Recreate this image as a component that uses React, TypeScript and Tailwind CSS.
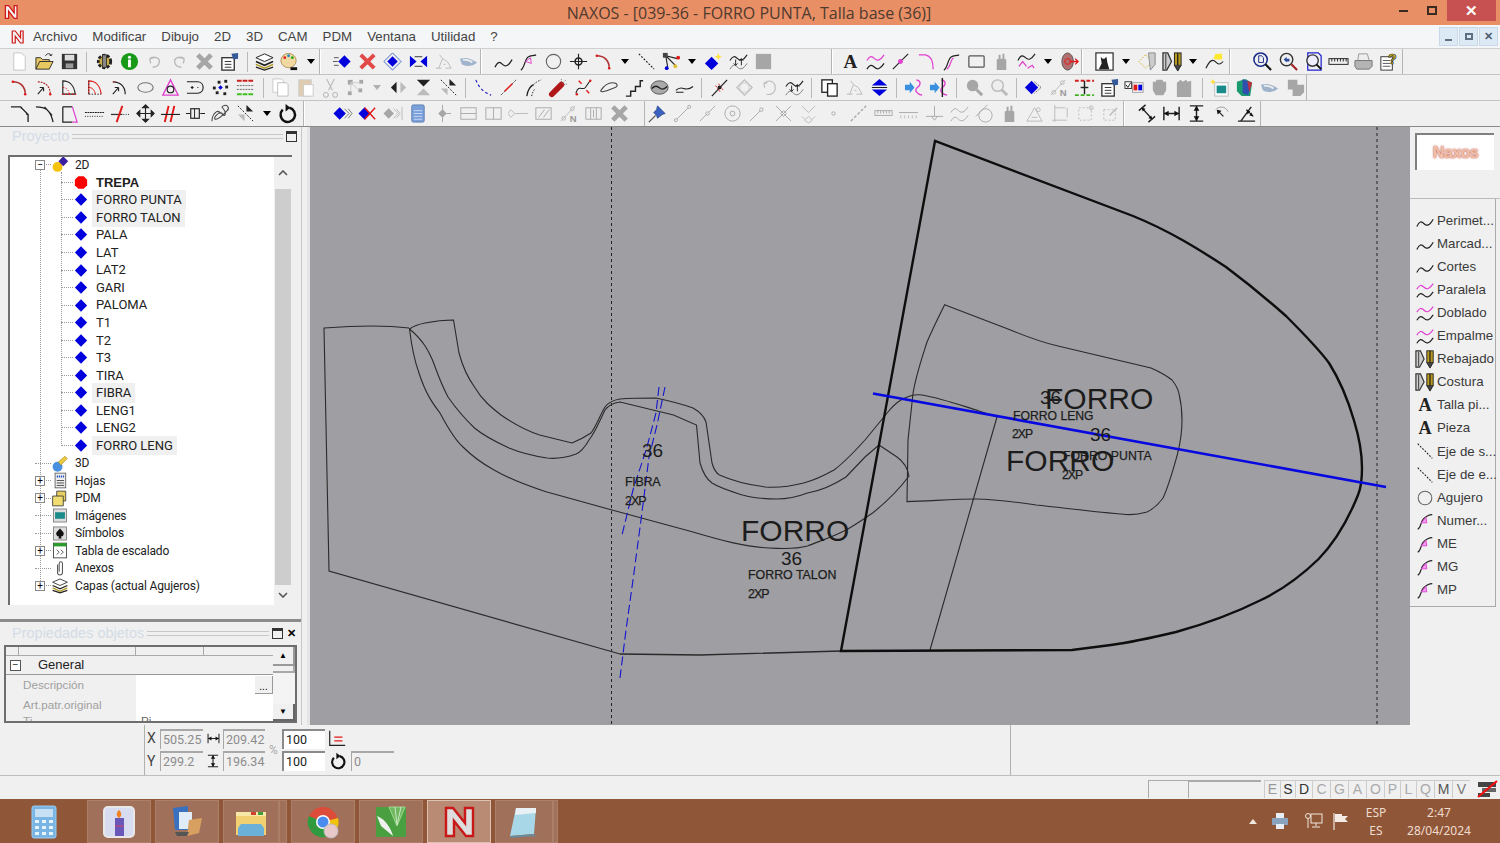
// Main window of the NAXOS pattern CAD program
import type { ReactNode } from 'react';

const G = '#a6a6a6';
const B = '#0000dd';
const R = '#e01818';
const P = '#e040d0';
const K = '#222222';

const diamond = (cx: number, cy: number, r: number, fill = B) => (
  <path d={`M${cx - r} ${cy}L${cx} ${cy - r}L${cx + r} ${cy}L${cx} ${cy + r}Z`} fill={fill} stroke="none" />
);
const wave = 'M2 17c3-6 5-6 8-3s6 2 10-5';
const wave2 = 'M2 10c3-5 5-5 8-2s6 2 10-4';
const wave3 = 'M2 19c3-5 5-5 8-2s6 2 10-4';

const ICONS: Record<string, ReactNode> = {
  new: <path d="M5 2h8l4 4v14H5z" fill="#fff" stroke="#c4c4c4" />,
  open: <><path d="M2 19V7h5l2 2h7v2H6l-4 8h14l4-8H6" fill="#e8c860" stroke="#333" /><path d="M12 5c2-3 5-3 6 0M18 5l-2-1M18 5l1-2" stroke="#333" /></>,
  save: <><rect x="3" y="3" width="16" height="16" fill="#333" stroke="none" /><rect x="6" y="4" width="10" height="6" fill="#ddd" stroke="none" /><rect x="7" y="13" width="8" height="5" fill="#999" stroke="none" /></>,
  gear: <><circle cx="11" cy="11" r="6.5" fill="#c9b04a" stroke="#222" strokeWidth="3" strokeDasharray="3 1.6" /><rect x="9" y="4" width="4" height="13" fill="#888" stroke="#222" strokeWidth=".8" /></>,
  info: <><circle cx="11" cy="11" r="9" fill="#189a18" stroke="none" /><circle cx="11" cy="6.5" r="1.6" fill="#fff" stroke="none" /><rect x="9.5" y="9" width="3" height="8" fill="#fff" stroke="none" /></>,
  undo: <path d="M6 8c5-3 11-1 10 4s-5 5-7 5M6 8l1 5M6 8l5-1" stroke="#b8b8b8" strokeWidth="1.4" />,
  redo: <path d="M16 8c-5-3-11-1-10 4s5 5 7 5M16 8l-1 5M16 8l-5-1" stroke="#b8b8b8" strokeWidth="1.4" />,
  xgray: <path d="M4 4l14 14M18 4L4 18" stroke={G} strokeWidth="5" />,
  props: <><rect x="3" y="7" width="13" height="13" fill="#fff" stroke="#333" strokeWidth="1.4" /><path d="M6 11h7M6 14h7M6 17h7" stroke="#333" /><path d="M13 3l7-1v6l-5 1z" fill="#345a9a" stroke="none" /></>,
  layers: <><path d="M2 7l9-4 9 4-9 4z" fill="#fff" stroke="#222" /><path d="M2 11l9 4 9-4" stroke="#222" strokeWidth="1.6" /><path d="M2 14l9 4 9-4" stroke="#b09a20" strokeWidth="1.6" /><path d="M2 17l9 3 9-3" stroke="#222" strokeWidth="1.4" /></>,
  palette: <><ellipse cx="10" cy="10" rx="8" ry="7.5" fill="#f0d8a0" stroke="#a08040" strokeWidth=".8" /><circle cx="6" cy="7" r="1.5" fill="#d22" stroke="none" /><circle cx="10" cy="5" r="1.5" fill="#28c" stroke="none" /><circle cx="14" cy="7" r="1.5" fill="#2a2" stroke="none" /><rect x="12" y="17" width="7" height="3" fill="#111" stroke="none" /></>,
  diaArrows: <>{diamond(13, 11, 6.5)}<path d="M2 7h5M1 11h5M2 15h5" stroke="#555" /></>,
  xred: <path d="M4 4l14 14M18 4L4 18" stroke="#e24a4a" strokeWidth="4.2" />,
  diaRing: <>{diamond(11, 11, 5.5)}<path d="M11 2l9 9-9 9-9-9z" stroke="#3060c0" strokeWidth=".9" /></>,
  bowtie: <><path d="M2 5l7 6-7 6zM20 5l-7 6 7 6z" fill={B} stroke="none" /><path d="M7 6h8M7 16h8" stroke="#333" /></>,
  treeG: <path d="M3 18h6M13 18h6M6 18l4-10 5 3 4 7M10 8l-3-4M11 14h2" stroke="#bbb" />,
  shoe: <><path d="M2 8c6-2 12 0 18 4-4 4-12 5-16 2z" fill="#9fb4cc" stroke="none" /><path d="M5 9c4 0 8 1 10 3" stroke="#eee" strokeWidth="2" /></>,
  curve: <path d={wave} strokeWidth="1.3" />,
  curveP: <><path d="M3 20c4-2 4-12 8-14 2-1 5-1 8-2" strokeWidth="1.3" /><path d="M8 11l5-4 1 6z" stroke={P} /></>,
  circle: <circle cx="11" cy="11" r="7.5" stroke="#666" strokeWidth="1.2" />,
  cross: <><path d="M2 11h18M11 3v16" strokeWidth="1.2" /><circle cx="11" cy="11" r="3.6" strokeWidth="1.6" /></>,
  arcR: <><path d="M4 5c8 0 13 5 13 13" strokeWidth="1.6" stroke="#b03030" /><circle cx="4" cy="5" r="1.3" fill={R} stroke="none" /><circle cx="17" cy="18" r="1.3" fill={R} stroke="none" /></>,
  dash: <path d="M3 3l16 16" strokeDasharray="2 1.6" strokeWidth="1.2" />,
  nodes: <><path d="M5 5l12 3M5 5l2 12M5 5l10 10" strokeWidth="1.2" /><rect x="2" y="2" width="5" height="5" fill="#444" stroke="none" /><circle cx="18" cy="7" r="2" fill={R} stroke="none" /><circle cx="6" cy="18" r="2" fill={B} stroke="none" /><circle cx="15" cy="16" r="2" fill="#e0c030" stroke="none" /></>,
  diaStar: <>{diamond(9, 13, 7)}<path d="M16 2l1 3 3 1-3 1-1 3-1-3-3-1 3-1z" fill="#ffe040" stroke="none" /></>,
  waveArr: <><path d={wave2} strokeWidth="1.2" /><path d="M2 19c3-5 5-5 8-2s6 2 10-4" stroke="#777" /><path d="M8 9v6M6 13l2 2 2-2M14 15V8M12 10l2-2 2 2" strokeWidth="1" /></>,
  square: <rect x="3" y="3" width="16" height="16" fill={G} stroke="none" />,
  A: <text x="11" y="18" textAnchor="middle" fontFamily="'Liberation Serif',serif" fontSize="20" fontWeight="700" fill="#222" stroke="none">A</text>,
  waveP: <><path d={wave2} stroke={P} strokeWidth="1.3" /><path d={wave3} strokeWidth="1.3" /></>,
  lineP: <><path d="M3 19L19 3" strokeWidth="1.2" /><circle cx="11" cy="11" r="2.6" fill={P} stroke="none" /></>,
  cornerP: <path d="M3 4h7c5 1 8 5 8 15" stroke={P} strokeWidth="1.3" />,
  curveP2: <><path d="M3 20c4-2 4-12 8-14 2-1 5-1 8-2" strokeWidth="1.3" /><path d="M6 19c4-2 4-10 7-12" stroke={P} strokeWidth="1.2" /></>,
  rect: <rect x="3" y="5" width="16" height="12" rx="1" stroke="#555" strokeWidth="1.3" />,
  hand: <path d="M6 20V9l2-1V4h2v4h2V3h2v5l2 1v11z" fill={G} stroke="none" />,
  waveMix: <><path d="M2 10c3-6 5-6 8-3s6 2 10-4" strokeWidth="1.2" /><path d="M3 16l4-5 4 5M12 18l5-3 2 3" stroke={P} strokeWidth="1.3" /></>,
  target: <><ellipse cx="9" cy="11" rx="6" ry="9" fill="#b07070" stroke="#555" /><circle cx="9" cy="11" r="3" stroke={R} /><path d="M11 11h9M17 8l3 3-3 3" stroke={R} strokeWidth="1.4" /></>,
  cat: <><rect x="2" y="2" width="18" height="18" fill="#fff" stroke="#333" strokeWidth="1.3" /><path d="M7 6l2 2h2l2-2 1 6 2 7H5l3-6z" fill="#222" stroke="none" /></>,
  dotDia: <><path d="M9 4l-7 7 7 7 7-7z" stroke="#c8b020" strokeDasharray="1.6 1.6" /><path d="M12 2h7v12l-5 6z" fill="#ccc" stroke="#888" /></>,
  pens: <><path d="M1 2h5l4 9-5 9H1z" stroke="#333" strokeWidth="1.3" fill="#ccc" /><path d="M4 3v16" stroke="#333" /><rect x="13" y="2" width="7" height="13" fill="#b89a20" stroke="#222" /><path d="M16.500 2v13" stroke="#222" strokeWidth="1.400" /><path d="M13 15l3.500 6 3.500-6" fill="#444" stroke="#222" /></>,
  curveY: <><path d="M2 18c3-6 5-9 8-8s5 7 10 1" strokeWidth="1.2" /><path d="M12 3h7v6h-7l-2-1z" fill="#ffe830" stroke="none" /></>,
  z1: <><circle cx="9" cy="9" r="7" stroke="#1a2a8a" strokeWidth="1.6" /><path d="M7 5h3l2 2v5H7z" stroke="#1a2a8a" /><path d="M14 14l6 6" stroke="#111" strokeWidth="2.2" /></>,
  z2: <><circle cx="9" cy="9" r="6.5" stroke="#333" strokeWidth="1.5" /><path d="M6 9l3-3v2h3v3H9v1z" fill="#2a4aa0" stroke="none" /><path d="M14 14l6 6" stroke="#a02020" strokeWidth="2.2" /></>,
  z3: <><path d="M5 2h11l3 3v15H5z" stroke="#2020d0" strokeWidth="1.3" /><circle cx="10" cy="10" r="6" fill="#eef" stroke="#333" strokeWidth="1.4" /><path d="M14 14l5 5" stroke="#111" strokeWidth="2" /></>,
  ruler: <><rect x="1" y="8" width="20" height="6" fill="#eee" stroke="#222" /><path d="M4 8v3M7 8v3M10 8v3M13 8v3M16 8v3M19 8v3" stroke="#222" /></>,
  printer: <><path d="M6 3h9l2 7H5z" fill="#eee" stroke="#999" /><path d="M2 10h18v6l-3 3H4l-2-3z" fill="#b4b4b4" stroke="#777" /></>,
  help: <><rect x="3" y="6" width="12" height="14" fill="#fff" stroke="#333" /><path d="M5 10h8M5 13h8M5 16h8" stroke="#555" /><text x="15" y="14" textAnchor="middle" fontFamily="'Liberation Sans',sans-serif" fontSize="15" fontWeight="700" fill="#e8d020" stroke="#222" strokeWidth=".7">?</text></>,
  arcA: <><path d="M4 5c8 0 13 5 13 13" strokeWidth="1.3" strokeDasharray="2 1" stroke="#b03030" /><path d="M4 18l6-7M10 11H6M10 11v4" strokeWidth="1.2" /><circle cx="17" cy="18" r="1.3" fill={R} stroke="none" /></>,
  sqArc: <><path d="M4 18V4c7 0 12 5 13 14z" strokeWidth="1.2" /><path d="M4 11c4 0 6 3 7 7" stroke={R} strokeDasharray="1.5 1.5" /><path d="M3 18h15" stroke={R} strokeDasharray="1.5 2" strokeWidth="1.5" /></>,
  sqArc2: <><path d="M5 18V4c7 0 12 5 13 14" stroke={R} strokeWidth="1.2" /><path d="M5 18h13M5 4v14" strokeDasharray="1.5 1.5" /><path d="M5 11c4 0 6 3 7 7" stroke={R} /></>,
  arcD: <><path d="M4 5c8 0 13 5 13 13" strokeWidth="1.3" /><path d="M4 5h3" stroke={R} strokeDasharray="1 1" /><path d="M4 18l6-7M10 11H6M10 11v4" strokeWidth="1.2" /></>,
  ellipse: <ellipse cx="11" cy="11" rx="8" ry="5" stroke="#777" strokeWidth="1.2" />,
  triP: <><path d="M11 3l8 16H3z" stroke={P} strokeWidth="1.4" /><circle cx="11" cy="13" r="3.5" strokeWidth="1.2" /></>,
  dShape: <><path d="M2 5h11c8 0 8 12 0 12H2" strokeWidth="1.2" /><path d="M6 11h3M7.5 9.500v3M13 11h1" strokeWidth="1.2" /></>,
  dots: <>{diamond(11, 11, 2.4)}<g fill="#222" stroke="none"><rect x="3" y="10" width="3" height="3" /><rect x="8" y="4" width="3" height="3" /><rect x="15" y="3" width="3" height="3" /><rect x="16" y="9" width="3" height="3" /><rect x="14" y="16" width="3" height="3" /><rect x="6" y="15" width="3" height="3" /></g></>,
  lines3: <><path d="M2 4h18" stroke="#cc2020" strokeWidth="2" strokeDasharray="5 1" /><path d="M2 9h18M2 13h18" strokeDasharray="2 1" stroke="#666" /><path d="M2 18h18" stroke="#40c020" strokeWidth="2" strokeDasharray="5 1" /></>,
  copy: <><path d="M3 2h9l2 2v12H3z" fill="#fff" stroke="#c8c8c8" /><path d="M8 6h9l2 2v12H8z" fill="#fff" stroke="#c0c0c0" /></>,
  paste: <><rect x="4" y="3" width="13" height="17" fill="#e0cdb0" stroke="#ccc" /><rect x="9" y="8" width="10" height="12" fill="#fff" stroke="#ccc" /></>,
  scissors: <path d="M7 2l6 12M15 2L9 14M8 17a2.500 2.500 0 1 1-.1-.1M14 17a2.500 2.500 0 1 0 .1-.1" stroke="#bbb" strokeWidth="1.2" />,
  nodesG: <><g fill={G} stroke="none"><rect x="3" y="3" width="5" height="5" /><rect x="15" y="3" width="4" height="4" /><rect x="3" y="15" width="4" height="4" /><rect x="14" y="12" width="4" height="4" /></g><path d="M6 6h10M6 6v10M6 6l9 8" stroke="#ccc" /></>,
  mirH: <><path d="M9 5v12l-6-6z" fill="#222" stroke="none" /><path d="M13 5v12l6-6z" fill="#bbb" stroke="none" /></>,
  mirV: <><path d="M4 3h14l-7 7z" fill="#222" stroke="none" /><path d="M4 19h14l-7-7z" fill="#bbb" stroke="none" /></>,
  mirD: <><path d="M3 3l16 16" strokeDasharray="2 1.5" /><path d="M12 2l7 7h-7z" fill="#222" stroke="none" /><path d="M3 12h7v7z" fill="#bbb" stroke="none" /></>,
  dashB: <path d="M3 3c3 8 8 13 16 16" stroke="#2020c0" strokeDasharray="3 2.500" strokeWidth="1.2" />,
  lineR: <><path d="M3 19L19 3" stroke="#555" strokeDasharray="3 1" /><path d="M7 15l8-8" stroke={R} strokeWidth="1.6" /></>,
  curveD: <><path d="M4 20c1-7 3-10 7-12" strokeWidth="1.3" /><path d="M11 8c2-2 5-4 8-5M9 20c1-4 2-6 4-8" strokeDasharray="1.500 1.500" /></>,
  dyn: <><path d="M4 18L14 8" stroke="#b01818" strokeWidth="6" strokeLinecap="round" /><path d="M15 7l4-4M17 8l4-1M14 5l0-4" stroke="#777" strokeDasharray="1 1" /></>,
  arrCurve: <><path d="M3 17c3-10 7-2 10-6s4-7 6-7" strokeWidth="1.1" /><path d="M6 4l3 3M17 17l-3-3" stroke={R} strokeWidth="1.5" /><circle cx="4" cy="18" r="1.3" fill={R} stroke="none" /><circle cx="18" cy="4" r="1.3" fill={R} stroke="none" /></>,
  oval: <path d="M2 14c4-6 8-8 12-8 6 0 6 4 3 5s-8 3-11 4-5 0-4-1z" strokeWidth="1.1" stroke="#444" />,
  stairs: <path d="M2 20h5v-5h5v-5h5V4h3" strokeWidth="1.5" />,
  blob: <><ellipse cx="11" cy="11" rx="9" ry="7" fill="#aaa" stroke="#555" /><path d="M3 12c4-4 6-2 9 0s5 0 7-2" strokeWidth="1.4" /></>,
  waveS: <path d="M2 14c3-3 5-3 8-2s6 1 10-2M2 16h8" strokeWidth="1.2" />,
  cut: <><path d="M3 20L19 3" strokeWidth="1.3" /><path d="M10 7l5 7M7 9l5 7" stroke={R} strokeDasharray="2 1" /><circle cx="11" cy="11" r="2" fill="#222" stroke="none" /></>,
  rotG1: <><path d="M11 3l8 8-8 8-8-8z" stroke="#bbb" strokeWidth="1.2" /><circle cx="11" cy="11" r="5" stroke="#ccc" /></>,
  rotG2: <path d="M5 7c4-5 12-3 12 4s-6 8-9 7M5 7l1 4M5 7l4-1" stroke="#bbb" strokeWidth="1.2" />,
  copyD: <><rect x="3" y="3" width="11" height="13" fill="#fff" stroke="#222" strokeWidth="1.4" /><rect x="9" y="7" width="10" height="13" fill="#fff" stroke="#222" strokeWidth="1.4" /></>,
  upDown: <><path d="M3 9l8-7 8 7z" fill={B} stroke="none" /><path d="M3 13l8 7 8-7z" fill={B} stroke="none" /><path d="M3 11h16" stroke="#111" /></>,
  arrP: <><path d="M13 3c5 1 5 5 1 8s0 7 5 8" stroke={P} strokeWidth="1.4" /><path d="M1 8h5V5l5 6-5 6v-3H1z" fill="#3a90e0" stroke="none" /></>,
  arrP2: <><path d="M13 3c5 1 5 5 1 8s0 7 5 8" stroke={P} strokeWidth="1.4" /><path d="M1 8h5V5l5 6-5 6v-3H1z" fill="#3a90e0" stroke="none" /><path d="M14 1v20" stroke="#222" strokeWidth="1.5" /></>,
  zG: <><circle cx="9" cy="9" r="6" fill={G} stroke="none" /><path d="M13 13l6 6" stroke={G} strokeWidth="3" /></>,
  zL: <><circle cx="9" cy="9" r="6" fill="#eee" stroke="#bbb" strokeWidth="1.5" /><path d="M13 13l6 6" stroke="#bbb" strokeWidth="3" /></>,
  diaO: <>{diamond(9, 11, 7)}<path d="M12 5l7 6-7 6" stroke="#555" strokeDasharray="1.500 1" /></>,
  nG: <><path d="M3 19L18 3" stroke="#bbb" /><circle cx="6" cy="16" r="2" stroke="#bbb" /><circle cx="15" cy="6" r="2" stroke="#bbb" /><text x="16" y="20" textAnchor="middle" fontFamily="'Liberation Sans',sans-serif" fontSize="10" fontWeight="700" fill="#999" stroke="none">N</text></>,
  tableRG: <><path d="M1 4h20" stroke="#d02020" strokeWidth="2" strokeDasharray="4 2" /><path d="M11 4v14" strokeWidth="1.5" /><path d="M1 19h20" stroke="#40b020" strokeWidth="2" strokeDasharray="4 2" /><path d="M7 11h8" strokeWidth="1.500" /></>,
  checkRB: <><rect x="1" y="5" width="7" height="7" fill="#fff" stroke="#333" /><path d="M2 8l2 3 3-5" stroke="#222" /><rect x="9" y="6" width="11" height="10" fill="#fff" stroke="#999" /><rect x="10" y="8" width="4" height="6" fill={R} stroke="none" /><rect x="15" y="8" width="4" height="6" fill={B} stroke="none" /></>,
  blobG: <path d="M4 5h3l1-2h6l1 2h3v9l-3 5H7l-3-5z" fill={G} stroke="none" />,
  handG: <path d="M3 6l4-3 2 2 4-2 1 2 4-1v17H3z" fill={G} stroke="none" />,
  img: <><rect x="6" y="6" width="14" height="14" fill="#fff" stroke="#bbb" /><rect x="8" y="9" width="10" height="8" fill="#1a8a8a" stroke="none" /><path d="M4 2l1 2 2 1-2 1-1 2-1-2-2-1 2-1z" fill="#ffe040" stroke="none" /></>,
  cube: <><path d="M3 5l9-3 7 4-2 14-9 0-5-5z" fill="#1a9a70" stroke="none" /><path d="M9 2l9 4-3 13-6-2z" fill="#3050b0" stroke="none" /><path d="M14 4l5 2-3 10z" fill="#c03040" stroke="none" /></>,
  shapes: <path d="M3 3h10v5h7v8l-4 4H8v-7H3z" fill={G} stroke="none" />,
  corner: <path d="M2 4h10l8 8v8M13 4v2M20 12h-2" strokeWidth="1.4" />,
  corner2: <path d="M2 4c10 0 15 3 18 16M11 4l8 9" strokeWidth="1.3" />,
  sqP: <><path d="M4 4v16h10" strokeWidth="1.3" /><path d="M4 4h10" strokeWidth="1.3" /><path d="M14 4l5 16h-5" stroke={P} strokeWidth="1.3" /></>,
  ticks: <><path d="M1 10h20" strokeWidth="1.2" strokeDasharray="2 .6" /><path d="M1 14h20" strokeDasharray="1 1.500" /></>,
  redCross: <><path d="M2 12h12" strokeWidth="1.3" stroke="#333" /><path d="M14 3L8 20" stroke={R} strokeWidth="2" /><path d="M15 12h6" strokeDasharray="1 1.500" /></>,
  move: <path d="M11 2v18M2 11h18M11 2l-3 3h6zM11 20l-3-3h6zM2 11l3-3v6zM20 11l-3-3v6z" fill="#222" strokeWidth="1.2" />,
  redDbl: <><path d="M9 3L5 20M15 3l-4 17" stroke={R} strokeWidth="2" /><path d="M1 12h20" strokeWidth="1.2" /></>,
  boxLine: <><path d="M1 11h5M16 11h5" strokeWidth="1.2" /><rect x="6" y="6" width="9" height="10" fill="#eee" strokeWidth="1.2" /><path d="M10 6v10" /></>,
  scribble: <path d="M2 19c0-6 2-8 5-10s9 8 9 2-6-6-2-8 7 2 4 5-8 9-12 9 3-9 7-6" strokeWidth="1.1" stroke="#444" />,
  rotate: <><path d="M6 7a7.500 7.500 0 1 0 7-2" strokeWidth="2.6" stroke="#111" /><path d="M9 1v8l5-4z" fill="#111" stroke="none" /></>,
  diaA: <>{diamond(8, 11, 6.5)}<path d="M13 6l5 5-5 5M17 6l4 5-4 5" stroke="#777" /></>,
  xDia: <>{diamond(8, 11, 6.5)}<path d="M8 5l11 12M19 5L8 17" stroke={R} strokeWidth="1.500" /></>,
  diaG: <>{diamond(7, 11, 5.5, G)}<path d="M12 6l5 5-5 5M15 6l4 5-4 5M21 4v14" stroke="#bbb" /></>,
  calc: <><rect x="5" y="2" width="13" height="18" rx="1.500" fill="#7aa0dc" stroke="#6080b0" /><path d="M7 8h9M7 11h9M7 14h9M7 17h9" stroke="#c8d8f0" /></>,
  nodeG: <>{diamond(11, 11, 4.500, G)}<path d="M11 2v5M11 15v5M15 11h5" stroke={G} /></>,
  tblL: <><rect x="3" y="5" width="16" height="12" stroke="#aaa" /><path d="M3 11h16" stroke="#aaa" /></>,
  cols: <><rect x="3" y="5" width="16" height="12" stroke="#aaa" /><path d="M11 5v12" stroke="#aaa" /></>,
  diaLine: <><path d="M3 7l4 4-4 4-3-4zM7 11h14" stroke="#bbb" /></>,
  slash: <><rect x="3" y="5" width="16" height="12" stroke="#aaa" /><path d="M6 15l6-8M11 15l6-8" stroke="#aaa" /></>,
  arrBox: <><rect x="3" y="5" width="16" height="12" stroke="#aaa" /><path d="M8 5v12M14 5v12M11 7v8" stroke="#aaa" /></>,
  pin: <><path d="M2 20l7-7" stroke="#555" strokeWidth="1.3" /><path d="M11 3l8 8-3 1-5 4-1-3-3-3 3-3z" fill="#3a60c0" stroke="#204080" strokeWidth=".7" /></>,
  lineDots: <><path d="M3 19L19 3" stroke="#aaa" /><circle cx="4" cy="18" r="1.600" fill="#f0f0f0" stroke="#aaa" /><circle cx="18" cy="4" r="1.600" fill="#f0f0f0" stroke="#aaa" /></>,
  lineDot: <><path d="M3 19L19 3" stroke="#aaa" /><circle cx="11" cy="11" r="1.800" fill="#f0f0f0" stroke="#aaa" /></>,
  tgt: <><circle cx="11" cy="11" r="8" stroke="#aaa" /><circle cx="11" cy="11" r="2.500" stroke="#aaa" /></>,
  lineEnd: <><path d="M3 19L17 5" stroke="#aaa" /><circle cx="15" cy="7" r="1.800" fill="#f0f0f0" stroke="#aaa" /></>,
  xc: <path d="M3 3l16 16M19 3L3 19M8 11l3-3 3 3-3 3z" stroke="#aaa" />,
  xd: <path d="M4 3l7 7 7-7M7 18l4-4 4 4-4 3zM4 14l3 3M18 14l-3 3" stroke="#bbb" />,
  dot: <circle cx="11" cy="11" r="1.800" stroke="#aaa" />,
  dotsL: <path d="M3 19L19 3" stroke="#aaa" strokeDasharray="3 2" strokeWidth="1.500" />,
  rul2: <><rect x="2" y="8" width="18" height="5" stroke="#aaa" /><path d="M5 8v3M8 8v3M11 8v3M14 8v3M17 8v3" stroke="#aaa" /></>,
  tk: <><path d="M1 10h20" stroke="#aaa" /><path d="M3 13v3M7 13v3M11 13v3M15 13v3M19 13v3" stroke="#bbb" /></>,
  perp: <path d="M2 14h18M11 3v11M8 14l3 4 3-4" stroke="#aaa" />,
  wavesG: <><path d={wave2} stroke="#aaa" /><path d={wave3} stroke="#aaa" /></>,
  circT: <><circle cx="12" cy="13" r="7" stroke="#aaa" /><path d="M2 14L14 2" stroke="#aaa" /></>,
  triG: <><path d="M3 19h16L11 5z" stroke="#bbb" /><circle cx="15" cy="7" r="2" stroke="#bbb" /><path d="M8 15h6" stroke="#bbb" /></>,
  cornG: <path d="M5 2v18M2 18h16M18 5v10M5 5h11" stroke="#bbb" />,
  boxD: <><rect x="4" y="5" width="13" height="13" stroke="#bbb" strokeDasharray="2 2" /><circle cx="17" cy="5" r="2" stroke="#bbb" /></>,
  boxD2: <><rect x="4" y="7" width="12" height="11" stroke="#bbb" strokeDasharray="2 2" /><path d="M10 13l8-8" stroke="#bbb" strokeWidth="1.500" /></>,
  dimD: <><path d="M3 8l7-6M13 20l7-6" strokeWidth="1.500" /><path d="M6 5l11 12" strokeWidth="1.300" /><path d="M6 5l4 1-3 3zM17 17l-4-1 3-3z" fill="#111" stroke="none" /></>,
  dimH: <><path d="M3 4v14M19 4v14M3 11h16" strokeWidth="1.500" /><path d="M3 11l5-3v6zM19 11l-5-3v6z" fill="#111" stroke="none" /></>,
  dimV: <><path d="M4 3h14M4 19h14M11 3v16" strokeWidth="1.500" /><path d="M11 3l-3 5h6zM11 19l-3-5h6z" fill="#111" stroke="none" /></>,
  radius: <><path d="M5 7c3-4 10-4 13 2" stroke="#999" /><path d="M7 8l6 6" strokeWidth="1.300" /><path d="M6 7l5 1-4 4z" fill="#111" stroke="none" /></>,
  angle: <><path d="M2 19h18M5 19L16 4" strokeWidth="1.500" /><path d="M11 7l7 7" strokeWidth="1.300" /><path d="M11 7l1 5 3-3zM18 14l-4-1 2-3z" fill="#111" stroke="none" /></>,
  pCurve: <><path d="M3 20c4-2 3-8 6-11s6-5 10-5" strokeWidth="1.300" /><path d="M7 13l5-6 1 6z" stroke={P} fill="#f0a0f0" /></>,
  lnRed: <><path d="M3 2v16h17" strokeWidth="1.300" /><path d="M8 9h9M8 13h9" stroke={R} strokeWidth="1.500" /></>,
};

function Icon({ name, className = 'w-[22px] h-[22px]' }: { name: string; className?: string }) {
  return (
    <svg viewBox="0 0 22 22" fill="none" stroke={K} className={className}>
      {ICONS[name]}
    </svg>
  );
}

function NaxosMark({ className }: { className: string }) {
  return (
    <svg viewBox="0 0 20 20" className={className}>
      <path d="M3 2h4l7 9V2h3.500v16H14L7 9v9H3z" fill="#f4f4f4" stroke="#d01818" strokeWidth="1.600" />
    </svg>
  );
}

function ToolItems({ items }: { items: string }) {
  return (
    <>
      {items.split(' ').map((t, i) => {
        if (t === '|')
          return (
            <div key={i} className="flex w-[9.4px] shrink-0 justify-center">
              <div className="h-[20px] w-px bg-[#b9b9b9]" />
            </div>
          );
        if (t === 'v' || t === 'vg')
          return (
            <div key={i} className="flex w-[17px] shrink-0 justify-center">
              <div className={t === 'v' ? 'h-0 w-0 border-x-[4px] border-t-[5px] border-x-transparent border-t-black' : 'h-0 w-0 border-x-[4px] border-t-[5px] border-x-transparent border-t-[#b0b0b0]'} />
            </div>
          );
        return (
          <div key={i} className="flex w-[25.2px] shrink-0 justify-center">
            <Icon name={t} className="h-[21px] w-[21px]" />
          </div>
        );
      })}
    </>
  );
}

function Group({ items, className }: { items: string; className: string }) {
  return (
    <div className={`flex h-full shrink-0 items-center border-r border-[#b4b4b4] ${className}`}>
      <ToolItems items={items} />
    </div>
  );
}

function Grip({ className }: { className: string }) {
  return <div className={`h-full shrink-0 border-l border-white ${className}`} />;
}

function TitleBar() {
  return (
    <div className="relative flex h-[25px] shrink-0 items-center justify-center bg-[#e98f66] font-['Open_Sans',sans-serif] text-[16px] text-[#4e3a2e]">
      <NaxosMark className="absolute left-[3px] top-[4px] h-[16px] w-[16px]" />
      <span className="pr-[2px]">NAXOS - [039-36 - FORRO PUNTA, Talla base (36)]</span>
      <div className="absolute right-[4px] top-0 flex h-[21px] items-center">
        <div className="mr-[19px] h-[2px] w-[9px] bg-[#3a2a20]" />
        <div className="mr-[10px] h-[9px] w-[10px] border-2 border-[#3a2a20]" />
        <div className="flex h-[21px] w-[49px] items-center justify-center bg-[#c75050] text-[15px] font-bold text-white">✕</div>
      </div>
    </div>
  );
}

const MENU = ['Archivo', 'Modificar', 'Dibujo', '2D', '3D', 'CAM', 'PDM', 'Ventana', 'Utilidad', '?'];

function MenuBar() {
  return (
    <div className="flex h-[24px] shrink-0 items-center border-b border-[#cfcfcf] bg-[#f5f6f7] pl-[10px] text-[13.3px] text-[#444]">
      <NaxosMark className="mr-[8px] h-[16px] w-[15px]" />
      <div className="flex gap-[15px]">
        {MENU.map((m) => (
          <span key={m}>{m}</span>
        ))}
      </div>
      <div className="ml-auto mr-[2px] flex gap-[1px]">
        <div className="flex h-[19px] w-[19px] items-end justify-center border border-[#c8d8e8] bg-[#dceaf6] pb-[4px]">
          <div className="h-[2px] w-[7px] bg-[#607080]" />
        </div>
        <div className="flex h-[19px] w-[19px] items-center justify-center border border-[#c8d8e8] bg-[#dceaf6]">
          <div className="h-[7px] w-[8px] border-2 border-[#607080]" />
        </div>
        <div className="flex h-[19px] w-[19px] items-center justify-center border border-[#c8d8e8] bg-[#dceaf6] text-[11px] font-bold text-[#506070]">✕</div>
      </div>
    </div>
  );
}

function Toolbars() {
  return (
    <div className="shrink-0 bg-[#f0f0f0]">
      <div className="flex h-[26px] border-b border-[#c4c4c4]">
        <Group className="w-[320px] pl-[6.5px]" items="new open save | gear info undo redo xgray props | layers palette v" />
        <Grip className="w-[10px]" />
        <Group className="w-[151px]" items="diaArrows xred diaRing bowtie treeG shoe" />
        <Grip className="w-[9.6px]" />
        <Group className="w-[341px]" items="curve curveP circle cross arcR v dash nodes v diaStar waveArr square" />
        <Grip className="w-[6.4px]" />
        <Group className="w-[244px]" items="A waveP lineP cornerP curveP2 rect hand waveMix v target" />
        <Grip className="w-[10.4px]" />
        <Group className="w-[138px]" items="cat v dotDia pens v curveY" />
        <Grip className="w-[20px]" />
        <Group className="w-[153px]" items="z1 z2 z3 ruler printer help" />
      </div>
      <div className="flex h-[26px] border-b border-[#c4c4c4]">
        <Group className="w-[1307px] pl-[6.5px]" items="arcR arcA sqArc sqArc2 arcD ellipse triP dShape dots lines3 | copy paste scissors nodesG vg mirH mirV mirD | dashB lineR curveD dyn arrCurve oval stairs blob waveS | cut rotG1 rotG2 waveArr | copyD treeG upDown | arrP arrP2 | zG zL | diaO nG tableRG props checkRB blobG handG | img cube shoe shapes" />
      </div>
      <div className="flex h-[26px] border-b border-[#8a8a8a]">
        <Group className="w-[304px] pl-[6.5px]" items="corner corner2 sqP ticks redCross move redDbl boxLine scribble mirD v rotate" />
        <Grip className="w-[25.5px]" />
        <Group className="w-[315px]" items="diaA xDia diaG calc nodeG tblL cols diaLine slash nG arrBox xgray" />
        <Group className="w-[479px]" items="pin lineDots lineDot tgt lineEnd xc xd dot dotsL rul2 tk perp wavesG circT hand triG cornG boxD boxD2" />
        <Grip className="w-[10px]" />
        <Group className="w-[127px]" items="dimD dimH dimV radius angle" />
      </div>
    </div>
  );
}

type Node = { label: string; icon: string; exp?: '+' | '-'; child?: boolean; mark?: boolean; bold?: boolean };

const TREE: Node[] = [
  { label: '2D', icon: 'n2d', exp: '-' },
  { label: 'TREPA', icon: 'red', child: true, bold: true },
  { label: 'FORRO PUNTA', icon: 'dia', child: true, mark: true },
  { label: 'FORRO TALON', icon: 'dia', child: true, mark: true },
  { label: 'PALA', icon: 'dia', child: true },
  { label: 'LAT', icon: 'dia', child: true },
  { label: 'LAT2', icon: 'dia', child: true },
  { label: 'GARI', icon: 'dia', child: true },
  { label: 'PALOMA', icon: 'dia', child: true },
  { label: 'T1', icon: 'dia', child: true },
  { label: 'T2', icon: 'dia', child: true },
  { label: 'T3', icon: 'dia', child: true },
  { label: 'TIRA', icon: 'dia', child: true },
  { label: 'FIBRA', icon: 'dia', child: true, mark: true },
  { label: 'LENG1', icon: 'dia', child: true },
  { label: 'LENG2', icon: 'dia', child: true },
  { label: 'FORRO LENG', icon: 'dia', child: true, mark: true },
  { label: '3D', icon: 'n3d' },
  { label: 'Hojas', icon: 'hojas', exp: '+' },
  { label: 'PDM', icon: 'pdm', exp: '+' },
  { label: 'Imágenes', icon: 'imgs' },
  { label: 'Símbolos', icon: 'simb' },
  { label: 'Tabla de escalado', icon: 'tabla', exp: '+' },
  { label: 'Anexos', icon: 'clip' },
  { label: 'Capas (actual Agujeros)', icon: 'layers', exp: '+' },
];

const TREE_ICONS: Record<string, ReactNode> = {
  red: <path d="M7 2h8l5 5v8l-5 5H7l-5-5V7z" fill="#f00" stroke="none" />,
  dia: diamond(11, 11, 9),
  n2d: <><circle cx="8" cy="14" r="6" fill="#f4c20d" stroke="none" />{diamond(15, 7, 6, '#3a20a0')}</>,
  n3d: <><circle cx="8" cy="15" r="6" fill="#4a90e0" stroke="none" /><path d="M9 9l8-7 3 3-8 8z" fill="#e8c840" stroke="#a08020" strokeWidth=".6" /></>,
  hojas: <><rect x="5" y="2" width="13" height="18" fill="#eee" stroke="#555" /><path d="M7 6h9" stroke="#2050c0" strokeWidth="2.500" strokeDasharray="1.500 1" /><path d="M7 11h9M7 14h9M7 17h9" stroke="#333" /></>,
  pdm: <><path d="M7 2h11v12H7z" fill="#e8d060" stroke="#333" /><path d="M2 8h13v12H2z" fill="#f0dc70" stroke="#333" /></>,
  imgs: <><rect x="3" y="3" width="16" height="16" fill="#ddd" stroke="#777" /><rect x="5" y="7" width="12" height="8" fill="#1a8a8a" stroke="none" /></>,
  simb: <><rect x="3" y="3" width="16" height="16" fill="#ddd" stroke="#777" /><path d="M11 5c3 4 6 5 4 8s-3 1-3 1l1 3H9l1-3s-1 2-3-1 1-4 4-8z" fill="#111" stroke="none" /></>,
  tabla: <><rect x="3" y="2" width="16" height="18" fill="#fff" stroke="#333" /><rect x="3" y="2" width="16" height="4" fill="#2a9a2a" stroke="none" /><path d="M7 10l3 3-3 3M12 10l3 3-3 3" stroke="#333" /></>,
  clip: <path d="M8 6v10c0 4 6 4 6 0V5c0-3-4-3-4 0v10" stroke="#555" strokeWidth="1.300" />,
  layers: <g stroke="#222">{ICONS.layers}</g>,
};

function TreeRow({ n }: { n: Node }) {
  return (
    <div className="flex h-[17.56px] items-center">
      <div className={n.child ? 'w-[51px] shrink-0' : 'w-[25px] shrink-0'} />
      {n.child ? (
        <div className="w-[12px] shrink-0 border-t border-dotted border-[#999]" />
      ) : (
        <div className="relative flex w-[16px] shrink-0 items-center">
          <div className="w-full border-t border-dotted border-[#999]" />
          {n.exp && (
            <div className="absolute left-0 flex h-[10px] w-[10px] items-center justify-center border border-[#888] bg-white text-[10px] leading-none text-black">
              {n.exp === '-' ? '−' : '+'}
            </div>
          )}
        </div>
      )}
      <svg viewBox="0 0 22 22" fill="none" className={n.child ? 'h-[15px] w-[16px] shrink-0' : 'h-[19px] w-[18px] shrink-0'}>
        {TREE_ICONS[n.icon]}
      </svg>
      {n.child ? (
        <span className={n.mark ? 'ml-[3px] bg-[#f0f0f0] px-[4px]' : n.bold ? 'ml-[3px] px-[4px] font-["Liberation_Sans",sans-serif] font-bold' : 'ml-[3px] px-[4px]'}>
          {n.label}
        </span>
      ) : (
        <span className="ml-[6px] whitespace-nowrap text-[12px] tracking-[-0.15px]">{n.label}</span>
      )}
    </div>
  );
}

function PanelHead({ title, close }: { title: string; close?: boolean }) {
  return (
    <div className="flex h-[17px] items-center gap-[3px] pl-[12px] pr-[4px]">
      <span className="text-[14.5px] text-[#d3dce6]">{title}</span>
      <div className="h-[5px] flex-1 border-y border-[#c8c8c8]" />
      <div className="h-[11px] w-[11px] border border-[#333] border-t-[3px] bg-[#f0f0f0]" />
      {close && <div className="flex h-[11px] w-[11px] items-center justify-center text-[11px] font-bold leading-none text-black">✕</div>}
    </div>
  );
}

function Chevron({ d }: { d: string }) {
  return (
    <svg viewBox="0 0 10 6" fill="none" stroke="#555" strokeWidth="1.600" className="h-[6px] w-[10px]">
      <path d={d} />
    </svg>
  );
}

function LeftPanel() {
  return (
    <div className="flex w-[310px] shrink-0 border-r-[3px] border-[#e4e4e4] bg-[#f0f0f0] pr-[5px]">
      <div className="flex min-w-0 flex-1 flex-col border-r border-[#c8c8c8]">
        <div className="pt-[1px]">
          <PanelHead title="Proyecto" />
        </div>
        <div className="relative ml-[8px] mr-[9px] mt-[10px] h-[450px] overflow-hidden border-l-2 border-t-2 border-[#6e6e6e] bg-white font-['Roboto',sans-serif] text-[13px] text-[#222]">
          <div className="absolute left-[30px] top-[7px] h-[421px] border-l border-dotted border-[#999]" />
          <div className="absolute left-[51px] top-[15px] h-[274px] border-l border-dotted border-[#999]" />
          <div className="-mt-[1px]">
            {TREE.map((n) => (
              <TreeRow key={n.label} n={n} />
            ))}
          </div>
          <div className="absolute bottom-0 right-0 top-0 flex w-[18px] flex-col items-center bg-[#f0f0f0]">
            <div className="flex h-[32px] items-center"><Chevron d="M1 5l4-4 4 4" /></div>
            <div className="w-[16px] flex-1 bg-[#cdcdcd]" />
            <div className="flex h-[20px] items-center"><Chevron d="M1 1l4 4 4-4" /></div>
          </div>
        </div>
        <div className="mt-[14px] border-t-[3px] border-[#8c8c8c] pt-[3px]">
          <PanelHead title="Propiedades objetos" close />
        </div>
        <div className="ml-[4px] mr-[4px] mt-[3px] flex h-[78px] overflow-hidden border-2 border-[#6e6e6e] bg-white text-[11.7px]">
          <div className="w-[267px] shrink-0">
            <div className="flex h-[9px] border-b border-[#aaa] bg-[#f0f0f0]">
              <div className="w-[13px] border-r border-[#aaa]" />
              <div className="w-[117px] border-r border-[#aaa]" />
              <div className="w-[68px] border-r border-[#aaa]" />
              <div className="w-[68px]" />
            </div>
            <div className="flex h-[19px] items-center border-b border-[#999] bg-[#f0f0f0] pl-[4px] text-[13px] text-[#222]">
              <div className="mr-[17px] flex h-[11px] w-[11px] items-center justify-center border border-[#555] bg-white text-[10px] leading-none">−</div>
              General
            </div>
            <div className="flex h-[20px] items-center">
              <div className="flex h-full w-[130px] items-center bg-[#f0f0f0] pl-[17px] text-[#a0a0a0]">Descripción</div>
              <div className="h-full flex-1" />
              <div className="flex h-[18px] w-[18px] items-end justify-center border-b border-r border-[#999] bg-[#f0f0f0] text-[10px] leading-[12px]">...</div>
            </div>
            <div className="flex h-[19px] items-center">
              <div className="flex h-full w-[130px] items-center bg-[#f0f0f0] pl-[17px] text-[#a0a0a0]">Art.patr.original</div>
            </div>
            <div className="flex h-[9px]">
              <div className="h-full w-[130px] bg-[#f0f0f0] pl-[17px] leading-[14px] text-[#a0a0a0]">Ti...</div>
              <div className="pl-[5px] leading-[14px] text-[#666]">Pi</div>
            </div>
          </div>
          <div className="flex flex-1 flex-col items-center bg-[#f4f4f4]">
            <div className="flex h-[19px] w-full items-center justify-center border-b-2 border-r-2 border-[#999] bg-[#f0f0f0] text-[8px]">▲</div>
            <div className="h-[7px] w-full border-b-2 border-r-2 border-[#aaa] bg-[#f0f0f0]" />
            <div className="flex-1" />
            <div className="flex h-[17px] w-full items-center justify-center border-b-2 border-r-2 border-[#666] bg-[#f0f0f0] text-[8px]">▼</div>
          </div>
        </div>
      </div>
    </div>
  );
}

function Canvas() {
  const sans = "'Liberation Sans',sans-serif";
  return (
    <div className="min-w-0 flex-1 bg-[#9f9fa3]">
      <svg viewBox="310 127 1100 598" className="block h-full w-full" fill="none" stroke="#2a2a2a" strokeWidth="1.100">
        <path d="M611.500 127V725M1377 127V725" stroke="#222" strokeDasharray="3 3" strokeWidth="1" />
        {/* heel lining */}
        <path d="M620 654L329 571L324 328C350 326 385 325 409 328" />
        <path d="M620 654L700 655L841 651" strokeWidth="1.300" />
        <path d="M409.500 329C412 350 415 362 419 373C426 395 434 405 440 413C449 430 455 440 463 447C475 459 485 465 494 470C515 482 532 487 547 492L612 510L693 532C720 540 745 547 769 548C785 549 797 549 807.500 546C820 541 835 536 846 530C855 525 865 518 872.600 513C885 503 898 491 909 476C908 470 904 462 897 457L879 445L865 457L846 477C832 486 820 491 807.500 493C797 497 787 499 777 499C765 499 753 498 742.500 495C730 491 720 488 712 483C705 478 702 470 700 463L696.500 425L673.500 415L620 402C612 403 608 406 605 410C600 420 596 431 589 440C585 447 581 452 576 454C565 458 556 459 547 458C534 456 521 453 509 448C496 442 484 436 474.500 428C463 417 455 407 448 397C441 384 437 372 432.500 360C429 352 424 341 409.500 329Z" />
        <path d="M409.500 329C415 325 420 324 425 323C435 321 445 320 453.500 320L459 353C463 368 468 378 474.500 387C482 400 492 408 501 415C514 424 527 431 539.600 435L572 443C579 440 585 437 591 433C597 425 600 415 605 407C608 403 614 400 620 399C632 398 645 398 656 398C670 401 682 404 693 408C700 412 704 416 706 422L712 463C714 470 716 473 719.500 475C735 482 750 485 765.400 487C780 488 792 486 803.700 483C815 480 825 475 834 470C845 462 855 451 865 440L888 412C892 407 896 403 901 400C908 396 915 394 922 395C940 398 960 405 977.500 410.400L997 417L930 650" />
        {/* toe lining */}
        <path d="M841 651L935 141L1133 216C1170 231 1200 250 1226 267C1250 285 1268 300 1286 316C1303 333 1318 348 1329 363C1341 382 1348 400 1354 420.500C1360 440 1362 455 1362 468C1362 480 1361 488 1358 495C1348 520 1335 542 1318.600 559C1300 577 1282 590 1261 600C1235 613 1205 624 1176 632C1155 637 1133 642 1111 645L1072 650Z" stroke="#0e0e0e" strokeWidth="2.400" />
        <path d="M944.600 304.700L1008 329C1025 336 1040 342 1058 346L1151 368C1160 372 1167 376 1172 380C1176 385 1178 389 1179 393.500C1181 402 1182 411 1182 420.500C1182 433 1180 444 1177.500 454C1173 470 1169 485 1163 498C1158 505 1153 509 1147 512C1140 514 1133 515 1126 514.500C1095 512 1065 508 1036 505C1015 502 995 499 976 499C955 499 930 501 907 501.600L908 440L913 393.500C916 375 922 358 927 342C933 328 939 316 944.600 304.700Z" />
        <path d="M873 393.500L1386 487" stroke="#0808e0" strokeWidth="2.600" />
        <path d="M659 387L656 413L647 447L633 490L622 535" stroke="#1414d0" strokeDasharray="9 4" />
        <path d="M665 387L657 425L649 457L641 520L633 580L626 630L620 678" stroke="#1414d0" strokeDasharray="9 4" />
        <g fontFamily={sans} fill="#1c1c1c" stroke="none">
          <text x="642" y="457" fontSize="19">36</text>
          <text x="625" y="486" fontSize="12.500" letterSpacing="-.3" stroke="#1c1c1c" strokeWidth=".25">FIBRA</text>
          <text x="625" y="505" fontSize="12.500" letterSpacing="-1" stroke="#1c1c1c" strokeWidth=".25">2XP</text>
          <text x="741" y="541" fontSize="30">FORRO</text>
          <text x="781" y="565" fontSize="19">36</text>
          <text x="748" y="579" fontSize="12.400" stroke="#1c1c1c" strokeWidth=".25">FORRO TALON</text>
          <text x="748" y="598" fontSize="12.400" letterSpacing="-1" stroke="#1c1c1c" strokeWidth=".25">2XP</text>
          <text x="1045" y="409" fontSize="30">FORRO</text>
          <text x="1040" y="404" fontSize="19">36</text>
          <text x="1013" y="420" fontSize="12.200" stroke="#1c1c1c" strokeWidth=".25">FORRO LENG</text>
          <text x="1012" y="438" fontSize="12.200" letterSpacing="-1" stroke="#1c1c1c" strokeWidth=".25">2XP</text>
          <text x="1090" y="441" fontSize="19">36</text>
          <text x="1006" y="471" fontSize="30">FORRO</text>
          <text x="1063" y="460" fontSize="12.300" stroke="#1c1c1c" strokeWidth=".25">FORRO PUNTA</text>
          <text x="1062" y="479" fontSize="12.300" letterSpacing="-1" stroke="#1c1c1c" strokeWidth=".25">2XP</text>
        </g>
      </svg>
    </div>
  );
}

const SIDE: [string, string][] = [
  ['curve', 'Perimet...'],
  ['curve', 'Marcad...'],
  ['curve', 'Cortes'],
  ['waveP', 'Paralela'],
  ['waveP', 'Doblado'],
  ['waveP', 'Empalme'],
  ['pens', 'Rebajado'],
  ['pens', 'Costura'],
  ['A', 'Talla pi...'],
  ['A', 'Pieza'],
  ['dash', 'Eje de s...'],
  ['dash', 'Eje de e...'],
  ['circle', 'Agujero'],
  ['pCurve', 'Numer...'],
  ['pCurve', 'ME'],
  ['pCurve', 'MG'],
  ['pCurve', 'MP'],
];

function RightPanel() {
  return (
    <div className="flex w-[90px] shrink-0 flex-col bg-[#f0f0f0]">
      <div className="h-[72px] shrink-0 border-b border-[#bbb] pl-[5px] pt-[6px]">
        <div className="flex h-[37px] w-[79px] items-center justify-center border-l-2 border-t-2 border-[#808080] bg-white font-['Liberation_Sans',sans-serif] text-[16px] font-bold tracking-[-0.5px] text-[#f0c0ac] [text-shadow:0_0_2px_#b02a18]">
          Naxos
        </div>
      </div>
      <div className="mr-[4px] border-b border-r border-[#aaa] pb-[4px] pl-[5px] pt-[10px] text-[13.3px] text-[#3a3a3a]">
        {SIDE.map(([icon, label]) => (
          <div key={label} className="flex h-[23.1px] items-center">
            <Icon name={icon} className="h-[20px] w-[20px] shrink-0" />
            <span className="whitespace-nowrap pl-[2px]">{label}</span>
          </div>
        ))}
      </div>
    </div>
  );
}

function Field({ value, white }: { value: string; white?: boolean }) {
  return (
    <div className={white ? 'h-[20px] border-l-2 border-t-2 border-[#8a8a8a] bg-white pl-[2px] text-[12.5px] leading-[18px] text-[#222]' : 'h-[20px] border-l border-t-2 border-[#a8a8a8] bg-[#f0f0f0] pl-[2px] text-[12.5px] leading-[18px] text-[#8c8c8c]'}>
      {value}
    </div>
  );
}

function CoordBar() {
  return (
    <div className="flex h-[51px] shrink-0 border-b border-[#bdbdbd] bg-[#f0f0f0] pl-[144px] font-['Roboto',sans-serif]">
      <div className="grid h-full w-[867px] grid-cols-[15px_43px_20px_42px_17px_43px_26px_43px] grid-rows-[23px_22px] content-start items-center border-x border-[#b0b0b0] pt-[2px] text-[#444]">
        <span className="pl-[2px] text-[14px]">X</span>
        <Field value="505.25" />
        <div className="flex justify-center"><Icon name="dimH" className="h-[15px] w-[15px]" /></div>
        <Field value="209.42" />
        <span className="row-span-2 text-center text-[12px] text-[#aaa]">%</span>
        <Field value="100" white />
        <div className="flex justify-start pl-[2px]"><Icon name="lnRed" className="h-[20px] w-[20px]" /></div>
        <div />
        <span className="pl-[2px] text-[14px]">Y</span>
        <Field value="299.2" />
        <div className="flex justify-center"><Icon name="dimV" className="h-[16px] w-[16px]" /></div>
        <Field value="196.34" />
        <Field value="100" white />
        <div className="flex justify-center"><Icon name="rotate" className="h-[18px] w-[18px]" /></div>
        <Field value="0" />
      </div>
    </div>
  );
}

const FLAGS: [string, string][] = [
  ['E', 'w-[16px] text-[#999]'],
  ['S', 'w-[15px] text-[#333]'],
  ['D', 'w-[17px] text-[#333]'],
  ['C', 'w-[18px] text-[#aaa]'],
  ['G', 'w-[18px] text-[#aaa]'],
  ['A', 'w-[18px] text-[#aaa]'],
  ['O', 'w-[18px] text-[#aaa]'],
  ['P', 'w-[16px] text-[#aaa]'],
  ['L', 'w-[16px] text-[#aaa]'],
  ['Q', 'w-[18px] text-[#aaa]'],
  ['M', 'w-[18px] text-[#555]'],
  ['V', 'w-[18px] text-[#777]'],
];

function StatusBar() {
  return (
    <div className="flex h-[23px] shrink-0 items-end bg-[#f0f0f0] pb-[1px] pl-[1148px] font-['Liberation_Sans',sans-serif] text-[14px]">
      <div className="h-[18px] w-[40px] border-l border-t border-[#aaa]" />
      <div className="h-[18px] w-[73px] border-l border-t-2 border-[#aaa]" />
      <div className="ml-[3px] flex">
        {FLAGS.map(([f, cls]) => (
          <div key={f} className={`flex h-[18px] items-center justify-center border-l border-t border-[#ccc] ${cls}`}>
            {f}
          </div>
        ))}
      </div>
      <svg viewBox="0 0 22 18" className="ml-[6px] h-[18px] w-[22px]" fill="none">
        <rect x="2" y="2" width="18" height="5" fill="#444" />
        <rect x="6" y="8" width="14" height="4" fill="#666" />
        <rect x="2" y="13" width="12" height="4" fill="#444" />
        <path d="M2 17L21 1" stroke="#f01010" strokeWidth="2.200" />
      </svg>
    </div>
  );
}

const TASK: Record<string, ReactNode> = {
  candle: <><rect x="3" y="3" width="30" height="30" rx="4" fill="#d8dcf0" stroke="#e8e8e8" strokeWidth="2" /><rect x="14" y="14" width="9" height="18" fill="#6a58b8" /><path d="M18 6c3 3 3 6 0 8-3-2-3-5 0-8z" fill="#f08020" /><path d="M14 22h9" stroke="#d04070" /></>,
  files: <><path d="M4 4l15-2v24H6z" fill="#3a70c0" /><rect x="10" y="8" width="13" height="17" fill="#e0ecf8" /><path d="M20 16l13-2-3 15-12 3z" fill="#d8a060" /><path d="M6 28h14l-2 4H8z" fill="#555" /></>,
  folder: <><path d="M3 8h12l3 3h15v20H3z" fill="#f0d070" /><path d="M3 8h30v4H3z" fill="#f8e8a8" /><rect x="18" y="8" width="5" height="3" fill="#d04030" /><rect x="25" y="8" width="5" height="3" fill="#40a040" /><path d="M8 20h20l3 4v8H5v-8z" fill="#6ab0d8" /></>,
  chrome: <><circle cx="18" cy="18" r="15" fill="#dd4b39" /><path d="M18 18L5 26a15 15 0 0 1-1-14z" fill="#309a40" /><path d="M18 18l15-4a15 15 0 0 1-13 19z" fill="#f4c20d" /><path d="M5 26l13-8 3 15a15 15 0 0 1-16-7z" fill="#309a40" /><circle cx="18" cy="18" r="7" fill="#fff" /><circle cx="18" cy="18" r="5.500" fill="#4a8bf0" /><circle cx="26" cy="27" r="7" fill="#e8c8c8" stroke="#bbb" /></>,
  corel: <><rect x="3" y="3" width="30" height="30" fill="#4aa040" /><path d="M4 12c8 3 14 12 16 20L8 22z" fill="#f0f0f0" /><path d="M16 3h16L24 22z" fill="#70b860" stroke="#a0d890" /><path d="M22 3l2 18M28 3l-4 18" stroke="#c8e8c0" /></>,
  naxos: <path d="M5 4h7l12 15V4h8v28h-7L13 17v15H5z" fill="#ddd" stroke="#c81818" strokeWidth="2.400" />,
  note: <><path d="M10 4h20l-2 26-24 2z" fill="#a8d8e8" /><path d="M10 4h20v5l-21 2z" fill="#e8f0f4" /><path d="M4 32l24-2 3 2-26 2z" fill="#6a8a98" /></>,
};

function TaskButton({ icon, className, active }: { icon: string; className: string; active?: boolean }) {
  return (
    <div className={`flex h-[43px] shrink-0 items-center justify-center border ${active ? 'border-[#dcc0b0] bg-[#b98a74]' : 'border-[#ab7f68] bg-[#a0705a]'} ${className}`}>
      <svg viewBox="0 0 36 36" className="h-[36px] w-[36px]">
        {TASK[icon]}
      </svg>
    </div>
  );
}

function Taskbar() {
  return (
    <div className="flex h-[44px] shrink-0 items-end bg-[#8f5638] font-['Noto_Sans',sans-serif] text-[12px] text-[#f0dccf]">
      <div className="flex h-[43px] w-[87px] shrink-0 items-center justify-center">
        <svg viewBox="0 0 30 36" className="h-[36px] w-[30px]">
          <rect x="3" y="2" width="24" height="32" rx="2" fill="#78b4e4" stroke="#9ccdf0" />
          <rect x="6" y="5" width="18" height="8" fill="#c8e0f4" />
          <g fill="#e8f4fc">
            <rect x="6" y="16" width="4" height="3" /><rect x="13" y="16" width="4" height="3" /><rect x="20" y="16" width="4" height="3" />
            <rect x="6" y="22" width="4" height="3" /><rect x="13" y="22" width="4" height="3" /><rect x="20" y="22" width="4" height="3" />
            <rect x="6" y="28" width="4" height="3" /><rect x="13" y="28" width="4" height="3" /><rect x="20" y="28" width="4" height="3" />
          </g>
        </svg>
      </div>
      <TaskButton icon="candle" className="w-[64px]" />
      <TaskButton icon="files" className="ml-[4px] w-[64px]" />
      <TaskButton icon="folder" className="ml-[4px] w-[56px]" />
      <div className="h-[43px] w-[8px] shrink-0 border border-[#ab7f68] bg-[#a0705a]" />
      <div className="h-[43px] w-[4px] shrink-0" />
      <TaskButton icon="chrome" className="w-[64px]" />
      <TaskButton icon="corel" className="ml-[4px] w-[64px]" />
      <TaskButton icon="naxos" className="ml-[4px] w-[64px]" active />
      <TaskButton icon="note" className="ml-[4px] w-[58px]" />
      <div className="h-[43px] w-[5px] shrink-0 border border-[#ab7f68] bg-[#a0705a]" />
      <div className="ml-auto flex h-full items-center">
        <div className="mr-[14px] h-0 w-0 border-x-[4px] border-b-[5px] border-x-transparent border-b-[#f0e8e0]" />
        <svg viewBox="0 0 18 18" className="mr-[15px] h-[18px] w-[18px]">
          <rect x="5" y="1" width="8" height="5" fill="#e8eef4" />
          <rect x="1" y="6" width="16" height="7" fill="#8aa4c0" />
          <rect x="5" y="12" width="8" height="5" fill="#e8eef4" />
        </svg>
        <svg viewBox="0 0 20 20" fill="none" stroke="#f0e8e0" className="mr-[8px] h-[20px] w-[20px]">
          <rect x="7" y="3" width="11" height="9" />
          <circle cx="4" cy="5" r="2.500" />
          <path d="M4 8v9M12 12v3M8 16h8" />
        </svg>
        <svg viewBox="0 0 18 20" className="mr-[11px] h-[20px] w-[18px]">
          <path d="M2 2v17" stroke="#f0e8e0" strokeWidth="1.200" />
          <path d="M3 3h7v2h6l-3 3 3 3h-6H3z" fill="#f4ece4" />
        </svg>
        <div className="mr-[16px] mt-[2px] flex w-[30px] flex-col items-center leading-[18px]">
          <span>ESP</span>
          <span>ES</span>
        </div>
        <div className="mr-[29px] mt-[2px] flex w-[64px] flex-col items-center leading-[18px]">
          <span>2:47</span>
          <span className="whitespace-nowrap">28/04/2024</span>
        </div>
      </div>
    </div>
  );
}

export default function App() {
  return (
    <div className="flex h-[843px] w-[1500px] flex-col overflow-hidden bg-[#f0f0f0] font-['Liberation_Sans',sans-serif]">
      <TitleBar />
      <MenuBar />
      <Toolbars />
      <div className="flex h-[598px] shrink-0">
        <LeftPanel />
        <Canvas />
        <RightPanel />
      </div>
      <CoordBar />
      <StatusBar />
      <Taskbar />
    </div>
  );
}
